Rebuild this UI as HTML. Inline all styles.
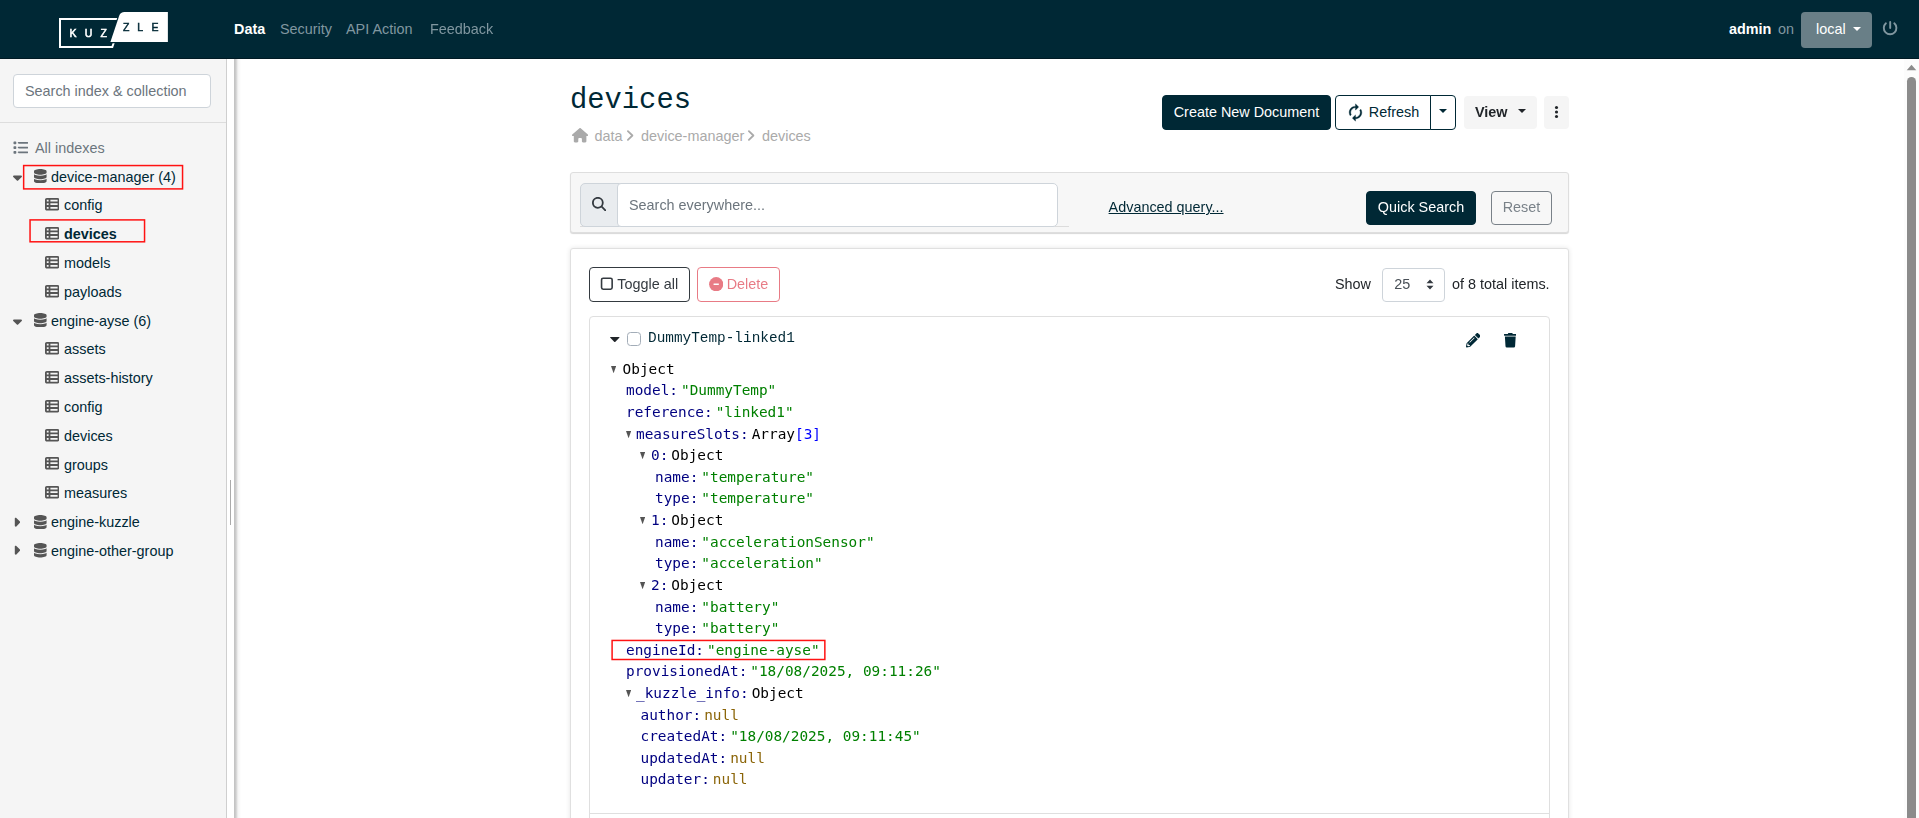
<!DOCTYPE html>
<html lang="en">
<head>
<meta charset="utf-8">
<title>Kuzzle Admin Console</title>
<style>
*{box-sizing:border-box}
html,body{margin:0;padding:0}
body{width:1919px;height:818px;overflow:hidden;position:relative;background:#fff;
 font-family:"Liberation Sans",sans-serif;font-size:14.4px;line-height:21.6px;color:#212529}
.abs{position:absolute}
.gray{position:absolute;left:0;top:0;width:1904px;height:818px;will-change:transform}
/* navbar */
#nav{position:absolute;left:0;top:0;width:1919px;height:59px;background:#002835;border-bottom:1px solid #001a24}
#nav .lnk{position:absolute;top:19px;color:#8097a0;white-space:nowrap}
#nav .lnk.act{color:#fff;font-weight:bold}
#local{position:absolute;left:1801px;top:12px;width:71px;height:36px;background:#697f87;border-radius:4px;color:#fff;padding:7px 0 0 15px}
/* sidebar */
#side{position:absolute;left:0;top:59px;width:226px;height:759px;background:#f5f5f5}
#side .row{position:absolute;white-space:nowrap;color:#002835}
#side svg{position:absolute}
#sinput{position:absolute;left:13px;top:15px;width:198px;height:34px;border:1px solid #ced4da;border-radius:4px;background:#fff;color:#6c757d;padding:5.7px 0 0 11px;white-space:nowrap}
#gut{position:absolute;left:226px;top:59px;width:9px;height:759px;background:#fff;border-left:1px solid #cfcfcf;border-right:1px solid #c4c4c4}
#gutsh{position:absolute;left:235px;top:59px;width:6px;height:759px;background:linear-gradient(to right,rgba(0,0,0,.21) 0,rgba(0,0,0,.2) 16%,rgba(0,0,0,.1) 34%,rgba(0,0,0,.04) 56%,rgba(0,0,0,0))}
.redbox{position:absolute;border:1px solid #f33}
/* main */
#main svg{position:absolute}
.btn{position:absolute;height:35px;border-radius:4px;white-space:nowrap;padding:5.7px 0 0 0;text-align:center;border:1px solid transparent}
.btn.pri{background:#002835;color:#fff;border-color:#002835}
.card{position:absolute;background:#fff;border:1px solid #dfdfdf;border-radius:4px}
.bc{position:absolute;top:126px;color:#aaa;white-space:nowrap}
.tv{position:absolute;font-family:"DejaVu Sans Mono",monospace;font-size:14.4px;line-height:21.6px;white-space:pre;color:#000}
.tv .k{color:#000080}
.tv .v{margin-left:3px}
.tv .s{color:#008000}
.tv .n{color:#8b6508}
.tv .b{color:#0000ff}
.chev{position:absolute;width:0;height:0;border-left:3px solid transparent;border-right:3px solid transparent;border-top:8px solid #555}
</style>
</head>
<body>
<div id="nav">
  <svg class="abs" style="left:56px;top:10px;will-change:transform" width="116" height="42" viewBox="0 0 116 42">
    <path d="M4 9 L65.7 9 L56.3 37 L4 37 Z" fill="none" stroke="#fff" stroke-width="2"/>
    <path d="M54.4 32.1 L63.2 5.8 Q64.5 2.1 68.5 2.1 L111.9 2.1 L111.9 32.1 Z" fill="#002835" stroke="#002835" stroke-width="2.4"/>
    <path d="M54.4 32.1 L63.2 5.8 Q64.5 2.1 68.5 2.1 L111.9 2.1 L111.9 32.1 Z" fill="#fff"/>
    <g font-family="Liberation Sans, sans-serif" font-size="10.5" fill="#fff" stroke="#fff" stroke-width=".55">
      <text x="13.4" y="26.7">K</text><text x="28.7" y="26.7">U</text><text x="44.5" y="26.7">Z</text>
    </g>
    <g font-family="Liberation Sans, sans-serif" font-size="10.5" fill="#002835" stroke="#002835" stroke-width=".5">
      <text x="67" y="20.8">Z</text><text x="81.2" y="20.8">L</text><text x="95.4" y="20.8">E</text>
    </g>
  </svg>
  <span class="lnk act" style="left:234px">Data</span>
  <span class="lnk" style="left:280px">Security</span>
  <span class="lnk" style="left:346px">API Action</span>
  <span class="lnk" style="left:430px;will-change:transform">Feedback</span>
  <span class="lnk act" style="left:1729px">admin</span>
  <span class="lnk" style="left:1778px">on</span>
  <div id="local">local<span class="abs" style="left:52px;top:15px;border-left:4.5px solid transparent;border-right:4.5px solid transparent;border-top:4.5px solid #fff"></span></div>
  <svg class="abs" style="left:1882px;top:20px" width="16" height="16" viewBox="0 0 16 16"><path d="M3.9 3.32 A6.3 6.3 0 1 0 12.3 3.32" fill="none" stroke="#8097a0" stroke-width="1.9" stroke-linecap="round"/><path d="M8.2 2 V8" stroke="#8097a0" stroke-width="1.9" stroke-linecap="round"/></svg>
</div>

<div id="side">
  <div id="sinput">Search index &amp; collection</div>
  <div class="abs" style="left:0;top:63px;width:226px;height:1px;background:#ddd"></div>
<svg style="left:13.2px;top:81.2px" width="15.20" height="15.2" viewBox="0 0 512 512"><path fill="#6c757d" fill-rule="evenodd" d="M40 48C26.7 48 16 58.7 16 72v48c0 13.3 10.7 24 24 24H88c13.3 0 24-10.7 24-24V72c0-13.3-10.7-24-24-24H40zM192 64c-17.7 0-32 14.3-32 32s14.3 32 32 32H480c17.7 0 32-14.3 32-32s-14.3-32-32-32H192zm0 160c-17.7 0-32 14.3-32 32s14.3 32 32 32H480c17.7 0 32-14.3 32-32s-14.3-32-32-32H192zm0 160c-17.7 0-32 14.3-32 32s14.3 32 32 32H480c17.7 0 32-14.3 32-32s-14.3-32-32-32H192zM16 232v48c0 13.3 10.7 24 24 24H88c13.3 0 24-10.7 24-24V232c0-13.3-10.7-24-24-24H40c-13.3 0-24 10.7-24 24zM40 368c-13.300 0-24 10.700-24 24v48c0 13.300 10.700 24 24 24H88c13.300 0 24-10.700 24-24V392c0-13.300-10.700-24-24-24H40z"/></svg>
<div class="row" style="left:35px;top:78.7px;color:#6c757d">All indexes</div>
<svg style="left:13px;top:110.8px" width="9.00" height="14.4" viewBox="0 0 320 512"><path fill="#555" fill-rule="evenodd" d="M137.4 374.600c12.500 12.500 32.800 12.500 45.300 0l128-128c9.200-9.200 11.900-22.900 6.900-34.900s-16.600-19.800-29.600-19.800L32 192c-12.900 0-24.600 7.800-29.600 19.800s-2.200 25.700 6.900 34.900l128 128z"/></svg>
<svg style="left:34.1px;top:110.0px" width="12.60" height="14.4" viewBox="0 0 448 512"><path fill="#555" fill-rule="evenodd" d="M448 80v48c0 44.2-100.3 80-224 80S0 172.2 0 128V80C0 35.8 100.3 0 224 0S448 35.8 448 80zM393.2 214.7c20.800-7.400 39.900-16.900 54.800-28.600V288c0 44.200-100.300 80-224 80S0 332.200 0 288V186.100c14.900 11.800 34 21.200 54.800 28.600C99.700 230.700 159.500 240 224 240s124.300-9.300 169.200-25.300zM0 346.100c14.900 11.800 34 21.200 54.800 28.600C99.700 390.700 159.500 400 224 400s124.300-9.300 169.200-25.300c20.800-7.400 39.900-16.900 54.800-28.600V432c0 44.200-100.300 80-224 80S0 476.200 0 432V346.100z"/></svg>
<div class="row" style="left:51px;top:107.5px">device-manager (4)</div>
<svg style="left:45px;top:138.2px" width="14.40" height="14.4" viewBox="0 0 512 512"><path fill="#555" fill-rule="evenodd" d="M0 96C0 60.7 28.7 32 64 32H448c35.3 0 64 28.7 64 64V416c0 35.3-28.7 64-64 64H64c-35.3 0-64-28.700-64-64V96zm64 0v64h64V96H64zm384 0H192v64H448V96zM64 224v64h64V224H64zm384 0H192v64H448V224zM64 352v64h64V352H64zm384 0H192v64H448V352z"/></svg>
<div class="row" style="left:64px;top:136.3px">config</div>
<svg style="left:45px;top:167.0px" width="14.40" height="14.4" viewBox="0 0 512 512"><path fill="#555" fill-rule="evenodd" d="M0 96C0 60.7 28.7 32 64 32H448c35.3 0 64 28.7 64 64V416c0 35.3-28.7 64-64 64H64c-35.3 0-64-28.700-64-64V96zm64 0v64h64V96H64zm384 0H192v64H448V96zM64 224v64h64V224H64zm384 0H192v64H448V224zM64 352v64h64V352H64zm384 0H192v64H448V352z"/></svg>
<div class="row" style="left:64px;top:165.1px;font-weight:bold">devices</div>
<svg style="left:45px;top:195.8px" width="14.40" height="14.4" viewBox="0 0 512 512"><path fill="#555" fill-rule="evenodd" d="M0 96C0 60.7 28.7 32 64 32H448c35.3 0 64 28.7 64 64V416c0 35.3-28.7 64-64 64H64c-35.3 0-64-28.700-64-64V96zm64 0v64h64V96H64zm384 0H192v64H448V96zM64 224v64h64V224H64zm384 0H192v64H448V224zM64 352v64h64V352H64zm384 0H192v64H448V352z"/></svg>
<div class="row" style="left:64px;top:193.9px">models</div>
<svg style="left:45px;top:224.6px" width="14.40" height="14.4" viewBox="0 0 512 512"><path fill="#555" fill-rule="evenodd" d="M0 96C0 60.7 28.7 32 64 32H448c35.3 0 64 28.7 64 64V416c0 35.3-28.7 64-64 64H64c-35.3 0-64-28.700-64-64V96zm64 0v64h64V96H64zm384 0H192v64H448V96zM64 224v64h64V224H64zm384 0H192v64H448V224zM64 352v64h64V352H64zm384 0H192v64H448V352z"/></svg>
<div class="row" style="left:64px;top:222.7px">payloads</div>
<svg style="left:13px;top:254.8px" width="9.00" height="14.4" viewBox="0 0 320 512"><path fill="#555" fill-rule="evenodd" d="M137.4 374.600c12.500 12.500 32.800 12.500 45.300 0l128-128c9.200-9.200 11.900-22.900 6.900-34.900s-16.600-19.800-29.600-19.800L32 192c-12.900 0-24.600 7.800-29.600 19.800s-2.200 25.700 6.900 34.900l128 128z"/></svg>
<svg style="left:34.1px;top:254.1px" width="12.60" height="14.4" viewBox="0 0 448 512"><path fill="#555" fill-rule="evenodd" d="M448 80v48c0 44.2-100.3 80-224 80S0 172.2 0 128V80C0 35.8 100.3 0 224 0S448 35.8 448 80zM393.2 214.7c20.800-7.400 39.900-16.900 54.800-28.600V288c0 44.200-100.300 80-224 80S0 332.200 0 288V186.100c14.900 11.800 34 21.200 54.800 28.600C99.700 230.700 159.500 240 224 240s124.300-9.300 169.200-25.300zM0 346.100c14.900 11.800 34 21.200 54.800 28.600C99.700 390.700 159.500 400 224 400s124.300-9.300 169.200-25.300c20.800-7.400 39.900-16.900 54.800-28.600V432c0 44.200-100.300 80-224 80S0 476.200 0 432V346.100z"/></svg>
<div class="row" style="left:51px;top:251.5px">engine-ayse (6)</div>
<svg style="left:45px;top:282.2px" width="14.40" height="14.4" viewBox="0 0 512 512"><path fill="#555" fill-rule="evenodd" d="M0 96C0 60.7 28.7 32 64 32H448c35.3 0 64 28.7 64 64V416c0 35.3-28.7 64-64 64H64c-35.3 0-64-28.700-64-64V96zm64 0v64h64V96H64zm384 0H192v64H448V96zM64 224v64h64V224H64zm384 0H192v64H448V224zM64 352v64h64V352H64zm384 0H192v64H448V352z"/></svg>
<div class="row" style="left:64px;top:280.3px">assets</div>
<svg style="left:45px;top:311.1px" width="14.40" height="14.4" viewBox="0 0 512 512"><path fill="#555" fill-rule="evenodd" d="M0 96C0 60.7 28.7 32 64 32H448c35.3 0 64 28.7 64 64V416c0 35.3-28.7 64-64 64H64c-35.3 0-64-28.700-64-64V96zm64 0v64h64V96H64zm384 0H192v64H448V96zM64 224v64h64V224H64zm384 0H192v64H448V224zM64 352v64h64V352H64zm384 0H192v64H448V352z"/></svg>
<div class="row" style="left:64px;top:309.1px">assets-history</div>
<svg style="left:45px;top:339.8px" width="14.40" height="14.4" viewBox="0 0 512 512"><path fill="#555" fill-rule="evenodd" d="M0 96C0 60.7 28.7 32 64 32H448c35.3 0 64 28.7 64 64V416c0 35.3-28.7 64-64 64H64c-35.3 0-64-28.700-64-64V96zm64 0v64h64V96H64zm384 0H192v64H448V96zM64 224v64h64V224H64zm384 0H192v64H448V224zM64 352v64h64V352H64zm384 0H192v64H448V352z"/></svg>
<div class="row" style="left:64px;top:337.9px">config</div>
<svg style="left:45px;top:368.6px" width="14.40" height="14.4" viewBox="0 0 512 512"><path fill="#555" fill-rule="evenodd" d="M0 96C0 60.7 28.7 32 64 32H448c35.3 0 64 28.7 64 64V416c0 35.3-28.7 64-64 64H64c-35.3 0-64-28.700-64-64V96zm64 0v64h64V96H64zm384 0H192v64H448V96zM64 224v64h64V224H64zm384 0H192v64H448V224zM64 352v64h64V352H64zm384 0H192v64H448V352z"/></svg>
<div class="row" style="left:64px;top:366.7px">devices</div>
<svg style="left:45px;top:397.4px" width="14.40" height="14.4" viewBox="0 0 512 512"><path fill="#555" fill-rule="evenodd" d="M0 96C0 60.7 28.7 32 64 32H448c35.3 0 64 28.7 64 64V416c0 35.3-28.7 64-64 64H64c-35.3 0-64-28.700-64-64V96zm64 0v64h64V96H64zm384 0H192v64H448V96zM64 224v64h64V224H64zm384 0H192v64H448V224zM64 352v64h64V352H64zm384 0H192v64H448V352z"/></svg>
<div class="row" style="left:64px;top:395.5px">groups</div>
<svg style="left:45px;top:426.2px" width="14.40" height="14.4" viewBox="0 0 512 512"><path fill="#555" fill-rule="evenodd" d="M0 96C0 60.7 28.7 32 64 32H448c35.3 0 64 28.7 64 64V416c0 35.3-28.7 64-64 64H64c-35.3 0-64-28.700-64-64V96zm64 0v64h64V96H64zm384 0H192v64H448V96zM64 224v64h64V224H64zm384 0H192v64H448V224zM64 352v64h64V352H64zm384 0H192v64H448V352z"/></svg>
<div class="row" style="left:64px;top:424.3px">measures</div>
<svg style="left:13.2px;top:455.7px" width="7.20" height="14.4" viewBox="0 0 256 512"><path fill="#555" fill-rule="evenodd" d="M246.600 278.600c12.500-12.500 12.500-32.800 0-45.300l-128-128c-9.200-9.200-22.900-11.900-34.900-6.900s-19.800 16.600-19.800 29.600l0 256c0 12.900 7.800 24.600 19.800 29.600s25.700 2.200 34.900-6.900l128-128z"/></svg>
<svg style="left:34.1px;top:455.7px" width="12.60" height="14.4" viewBox="0 0 448 512"><path fill="#555" fill-rule="evenodd" d="M448 80v48c0 44.2-100.3 80-224 80S0 172.2 0 128V80C0 35.8 100.3 0 224 0S448 35.8 448 80zM393.2 214.7c20.800-7.400 39.900-16.900 54.800-28.600V288c0 44.200-100.300 80-224 80S0 332.200 0 288V186.100c14.900 11.800 34 21.200 54.800 28.600C99.700 230.700 159.500 240 224 240s124.300-9.300 169.200-25.300zM0 346.100c14.900 11.800 34 21.200 54.800 28.600C99.700 390.700 159.500 400 224 400s124.300-9.300 169.200-25.300c20.800-7.400 39.900-16.900 54.800-28.600V432c0 44.200-100.300 80-224 80S0 476.200 0 432V346.100z"/></svg>
<div class="row" style="left:51px;top:453.1px">engine-kuzzle</div>
<svg style="left:13.2px;top:484.4px" width="7.20" height="14.4" viewBox="0 0 256 512"><path fill="#555" fill-rule="evenodd" d="M246.600 278.600c12.500-12.500 12.500-32.800 0-45.300l-128-128c-9.200-9.200-22.900-11.900-34.900-6.900s-19.800 16.600-19.800 29.600l0 256c0 12.900 7.800 24.600 19.800 29.600s25.700 2.200 34.900-6.900l128-128z"/></svg>
<svg style="left:34.1px;top:484.4px" width="12.60" height="14.4" viewBox="0 0 448 512"><path fill="#555" fill-rule="evenodd" d="M448 80v48c0 44.2-100.3 80-224 80S0 172.2 0 128V80C0 35.8 100.3 0 224 0S448 35.8 448 80zM393.2 214.7c20.800-7.400 39.900-16.900 54.800-28.600V288c0 44.200-100.300 80-224 80S0 332.200 0 288V186.100c14.900 11.800 34 21.200 54.800 28.600C99.700 230.700 159.500 240 224 240s124.300-9.300 169.200-25.300zM0 346.100c14.900 11.800 34 21.200 54.800 28.600C99.700 390.700 159.500 400 224 400s124.300-9.300 169.200-25.300c20.800-7.400 39.900-16.900 54.800-28.600V432c0 44.200-100.300 80-224 80S0 476.200 0 432V346.100z"/></svg>
<div class="row" style="left:51px;top:481.9px">engine-other-group</div>
</div>
<div id="gut"><div class="abs" style="left:3px;top:421px;width:1px;height:45px;background:#aaa"></div></div><div id="gutsh"></div>

<div id="main">
  <div class="abs" style="left:570px;top:81.5px;font-family:'Liberation Mono',monospace;font-size:28.8px;line-height:38px;color:#002835">devices</div>
  <!-- breadcrumb -->
  <svg style="left:571.8px;top:128.3px" width="16.20" height="14.4" viewBox="0 0 576 512"><path fill="#aaa" fill-rule="evenodd" d="M575.8 255.500c0 18-15 32.100-32 32.100h-32l.7 160.200c0 2.700-.2 5.400-.5 8.100V472c0 22.100-17.900 40-40 40H456c-1.100 0-2.200 0-3.300-.1c-1.400.1-2.800.1-4.200.1H416 392c-22.100 0-40-17.900-40-40V448 384c0-17.700-14.300-32-32-32H256c-17.700 0-32 14.300-32 32v64 24c0 22.100-17.900 40-40 40H160 128.100c-1.500 0-3-.1-4.500-.2c-1.200.1-2.400.2-3.600.2H104c-22.100 0-40-17.900-40-40V360c0-.9 0-1.900.1-2.800V287.600H32c-18 0-32-14-32-32.100c0-9 3-17 10-24L266.400 8c7-7 15-8 22-8s15 2 21 7L564.800 231.500c8 7 12 15 11 24z"/></svg>
  <span class="bc" style="left:594.5px">data</span>
  <svg style="left:626px;top:129px" width="9" height="13" viewBox="0 0 9 13"><path d="M1.9 2.1 L6.4 6.5 L1.9 10.9" fill="none" stroke="#aaa" stroke-width="1.8" stroke-linecap="round" stroke-linejoin="round"/></svg>
  <span class="bc" style="left:641px">device-manager</span>
  <svg style="left:747px;top:129px" width="9" height="13" viewBox="0 0 9 13"><path d="M1.9 2.1 L6.4 6.5 L1.9 10.9" fill="none" stroke="#aaa" stroke-width="1.8" stroke-linecap="round" stroke-linejoin="round"/></svg>
  <span class="bc" style="left:762px">devices</span>

  <!-- header buttons -->
  <div class="btn pri" style="left:1162px;top:95px;width:169px">Create New Document</div>
  <div class="btn" style="left:1335px;top:95px;width:96px;border-color:#002835;color:#002835;border-radius:4px 0 0 4px;background:#fff;padding-left:22px">Refresh</div>
  <svg style="left:1345.7px;top:103px" width="19" height="19" viewBox="0 0 24 24"><path fill="#002835" stroke="#002835" stroke-width=".4" d="M12 6v3l4-4-4-4v3c-4.42 0-8 3.58-8 8 0 1.57.46 3.03 1.24 4.26L6.7 14.8c-.45-.83-.7-1.79-.7-2.8 0-3.31 2.69-6 6-6zm6.76 1.740L17.300 9.200c.44.840.700 1.790.700 2.800 0 3.310-2.690 6-6 6v-3l-4 4 4 4v-3c4.420 0 8-3.580 8-8 0-1.570-.460-3.030-1.240-4.260z"/></svg>
  <div class="btn" style="left:1430px;top:95px;width:26px;border-color:#002835;border-radius:0 4px 4px 0;background:#fff"></div>
  <span class="abs" style="left:1439px;top:109px;border-left:4px solid transparent;border-right:4px solid transparent;border-top:4px solid #002835"></span>
  <div class="gray">
  <div class="btn" style="left:1464px;top:96px;width:73px;height:33px;background:#f5f5f5;color:#212529;font-weight:bold;text-align:left;padding:4.7px 0 0 10px">View</div>
  <span class="abs" style="left:1518px;top:109px;border-left:4px solid transparent;border-right:4px solid transparent;border-top:4px solid #212529"></span>
  <div class="btn" style="left:1544px;top:96px;width:25px;height:33px;background:#f5f5f5"></div>
  <svg style="left:1553.75px;top:104.7px" width="5" height="14" viewBox="0 0 5 14"><g fill="#212529"><circle cx="2.5" cy="2.5" r="1.55"/><circle cx="2.5" cy="7" r="1.55"/><circle cx="2.5" cy="11.5" r="1.55"/></g></svg>

  <!-- search card -->
  <div class="card" style="left:570px;top:172px;width:999px;height:61px;background:#f7f7f7;border-color:#dedede;border-radius:3px;box-shadow:0 1px 1px rgba(0,0,0,.16)"></div>
  <div class="abs" style="left:580px;top:226px;width:489px;height:1px;background:#dcdcdc"></div>
  <div class="abs" style="left:580px;top:183px;width:43px;height:44px;background:#e9ecef;border:1px solid #ced4da;border-radius:5px 0 0 5px"></div>
  <svg style="left:591.5px;top:197.0px" width="14.40" height="14.4" viewBox="0 0 512 512"><path fill="#343a40" fill-rule="evenodd" d="M416 208c0 45.900-14.900 88.300-40 122.700L502.600 457.400c12.500 12.500 12.500 32.800 0 45.300s-32.800 12.500-45.300 0L330.700 376c-34.400 25.200-76.800 40-122.700 40C93.100 416 0 322.900 0 208S93.100 0 208 0S416 93.100 416 208zM208 352a144 144 0 1 0 0-288 144 144 0 1 0 0 288z"/></svg>
  <div class="abs" style="left:617px;top:183px;width:441px;height:44px;background:#fff;border:1px solid #ced4da;border-radius:4px 5px 5px 4px;color:#6c757d;padding:11px 0 0 11px">Search everywhere...</div>
  <span class="abs" style="left:1108.6px;top:197px;color:#002835;text-decoration:underline">Advanced query...</span>
  <div class="btn pri" style="left:1366px;top:191px;width:110px;height:34px;padding-top:4.6px">Quick Search</div>
  <div class="btn" style="left:1491px;top:191px;width:61px;height:34px;padding-top:4.6px;border-color:#6c757d;color:#6c757d;opacity:.9">Reset</div>

  <!-- list card -->
  <div class="card" style="left:570px;top:248px;width:999px;height:600px;border-color:#e0e0e0;border-radius:3px;box-shadow:0 0 5px rgba(0,0,0,.1)"></div>
  <div class="btn" style="left:589px;top:267px;width:101px;border-color:#343a40;color:#343a40;padding-left:16.4px">Toggle all</div>
  <svg style="left:600px;top:277px" width="14" height="14" viewBox="0 0 14 14"><rect x="1.55" y="1.2" width="10.6" height="11" rx="1.6" fill="none" stroke="#343a40" stroke-width="1.6"/></svg>
  <div class="btn" style="left:697px;top:267px;width:83px;border-color:#dc3545;color:#dc3545;padding-left:18px;opacity:.65">Delete</div>
  <svg style="left:708.6px;top:276.6px;opacity:.65" width="14.4" height="14.4" viewBox="0 0 16 16"><circle cx="8" cy="8" r="7.9" fill="#dc3545"/><rect x="5" y="7.15" width="6" height="1.7" rx=".4" fill="#fff"/></svg>
  <span class="abs" style="left:1335px;top:274px">Show</span>
  <div class="abs" style="left:1382px;top:268px;width:63px;height:34px;border:1px solid #ced4da;border-radius:4px;background:#fff;color:#495057;padding:4.6px 0 0 11.3px">25</div>
  <svg style="left:1425.6px;top:279px" width="8" height="11" viewBox="0 0 8 11"><path d="M0.5 4.2 L4 0.5 L7.5 4.2 Z M0.5 6.8 L4 10.5 L7.5 6.8 Z" fill="#343a40"/></svg>
  <span class="abs" style="left:1452px;top:274px">of 8 total items.</span>

  <div class="abs" style="left:589px;top:316px;width:961px;height:498px;border:1px solid #dfdfdf;border-radius:4px 4px 0 0;background:#fff"></div>
  <div class="abs" style="left:589px;top:813px;width:961px;height:20px;border:1px solid #dfdfdf;border-top:none"></div>
  <svg style="left:610.1px;top:337px" width="9.6" height="5.2" viewBox="0 0 9.6 5.2"><path d="M0.5 0 H9.1 Q9.9 0.1 9.3 0.8 L5.4 4.8 Q4.8 5.3 4.2 4.8 L0.3 0.8 Q-0.3 0.1 0.5 0 Z" fill="#212529"/></svg>
  <div class="abs" style="left:627px;top:332px;width:14px;height:14px;border:1px solid #a3adb8;border-radius:3.5px;background:#fff"></div>
  <div class="abs" style="left:648px;top:328px;font-family:'Liberation Mono',monospace;font-size:14.4px;color:#002835">DummyTemp-linked1</div>
  <svg style="left:1466.0px;top:333.4px" width="14.40" height="14.4" viewBox="0 0 512 512"><path fill="#002835" fill-rule="evenodd" d="M497.9 142.100l-46.100 46.100c-4.700 4.700-12.300 4.700-17 0l-111-111c-4.700-4.700-4.700-12.300 0-17l46.100-46.100c18.700-18.700 49.100-18.700 67.900 0l60.100 60.100c18.800 18.700 18.800 49.100 0 67.900zM284.200 99.800L21.600 362.400.4 483.900c-2.900 16.400 11.400 30.600 27.800 27.800l121.500-21.300 262.600-262.600c4.700-4.700 4.700-12.300 0-17l-111-111c-4.800-4.700-12.400-4.700-17.100 0zM124.100 339.900c-5.500-5.500-5.500-14.300 0-19.800l154-154c5.500-5.500 14.300-5.500 19.800 0s5.500 14.300 0 19.800l-154 154c-5.500 5.500-14.300 5.500-19.800 0zM88 424h48v36.300l-64.500 11.300-31.100-31.100L51.700 376H88v48z"/></svg>
  <svg style="left:1503.7px;top:333.4px" width="12.60" height="14.4" viewBox="0 0 448 512"><path fill="#002835" fill-rule="evenodd" d="M432 32H312l-9.400-18.700A24 24 0 0 0 281.100 0H166.800a23.720 23.720 0 0 0-21.400 13.300L136 32H16A16 16 0 0 0 0 48v32a16 16 0 0 0 16 16h416a16 16 0 0 0 16-16V48a16 16 0 0 0-16-16zM53.200 467a48 48 0 0 0 47.900 45h245.800a48 48 0 0 0 47.900-45L416 128H32z"/></svg>
<svg style="left:610.8px;top:366.1px" width="5.2" height="7.3" viewBox="0 0 5.2 7.3"><path d="M0 0H5.2L2.6 7.3Z" fill="#555"/></svg>
<div class="tv" style="left:622.6px;top:359.2px">Object</div>
<div class="tv" style="left:626px;top:380.2px"><span class="k">model:</span><span class="v s">"DummyTemp"</span></div>
<div class="tv" style="left:626px;top:402.2px"><span class="k">reference:</span><span class="v s">"linked1"</span></div>
<svg style="left:625.8px;top:431.1px" width="5.2" height="7.3" viewBox="0 0 5.2 7.3"><path d="M0 0H5.2L2.6 7.3Z" fill="#555"/></svg>
<div class="tv" style="left:636px;top:424.2px"><span class="k">measureSlots:</span><span class="v">Array</span><span class="b">[3]</span></div>
<svg style="left:640.0px;top:452.1px" width="5.2" height="7.3" viewBox="0 0 5.2 7.3"><path d="M0 0H5.2L2.6 7.3Z" fill="#555"/></svg>
<div class="tv" style="left:651px;top:445.2px"><span class="k">0:</span><span class="v">Object</span></div>
<div class="tv" style="left:655px;top:467.2px"><span class="k">name:</span><span class="v s">"temperature"</span></div>
<div class="tv" style="left:655px;top:488.2px"><span class="k">type:</span><span class="v s">"temperature"</span></div>
<svg style="left:640.0px;top:517.1px" width="5.2" height="7.3" viewBox="0 0 5.2 7.3"><path d="M0 0H5.2L2.6 7.3Z" fill="#555"/></svg>
<div class="tv" style="left:651px;top:510.2px"><span class="k">1:</span><span class="v">Object</span></div>
<div class="tv" style="left:655px;top:532.2px"><span class="k">name:</span><span class="v s">"accelerationSensor"</span></div>
<div class="tv" style="left:655px;top:553.2px"><span class="k">type:</span><span class="v s">"acceleration"</span></div>
<svg style="left:640.0px;top:582.1px" width="5.2" height="7.3" viewBox="0 0 5.2 7.3"><path d="M0 0H5.2L2.6 7.3Z" fill="#555"/></svg>
<div class="tv" style="left:651px;top:575.2px"><span class="k">2:</span><span class="v">Object</span></div>
<div class="tv" style="left:655px;top:597.2px"><span class="k">name:</span><span class="v s">"battery"</span></div>
<div class="tv" style="left:655px;top:618.2px"><span class="k">type:</span><span class="v s">"battery"</span></div>
<div class="tv" style="left:626px;top:640.2px"><span class="k">engineId:</span><span class="v s">"engine-ayse"</span></div>
<div class="tv" style="left:626px;top:661.2px"><span class="k">provisionedAt:</span><span class="v s">"18/08/2025, 09:11:26"</span></div>
<svg style="left:625.8px;top:690.1px" width="5.2" height="7.3" viewBox="0 0 5.2 7.3"><path d="M0 0H5.2L2.6 7.3Z" fill="#555"/></svg>
<div class="tv" style="left:636px;top:683.2px"><span class="k">_kuzzle_info:</span><span class="v">Object</span></div>
<div class="tv" style="left:640.5px;top:705.2px"><span class="k">author:</span><span class="v n">null</span></div>
<div class="tv" style="left:640.5px;top:726.2px"><span class="k">createdAt:</span><span class="v s">"18/08/2025, 09:11:45"</span></div>
<div class="tv" style="left:640.5px;top:748.2px"><span class="k">updatedAt:</span><span class="v n">null</span></div>
<div class="tv" style="left:640.5px;top:769.2px"><span class="k">updater:</span><span class="v n">null</span></div>
  </div>
</div>

<svg class="abs" style="left:0;top:0;pointer-events:none" width="1904" height="818" viewBox="0 0 1904 818"><g fill="none" stroke="#ff1212" stroke-width="1.5"><rect x="23.65" y="165.55" width="158.90" height="23.35"/><rect x="30.05" y="219.9" width="114.50" height="21.90"/><rect x="612.1" y="640.45" width="212.75" height="19.05"/></g></svg>
<!-- scrollbar -->
<div class="abs" style="left:1904px;top:59px;width:15px;height:759px;background:#fcfcfc"></div>
<svg class="abs" style="left:1906px;top:64px" width="11" height="7" viewBox="0 0 11 7"><path d="M0.7 6.2 L5.5 0.8 L10.3 6.2 Z" fill="#8b8b8b"/></svg>
<div class="abs" style="left:1907px;top:77px;width:9px;height:760px;border-radius:4.5px;background:#8b8b8b"></div>
</body>
</html>
